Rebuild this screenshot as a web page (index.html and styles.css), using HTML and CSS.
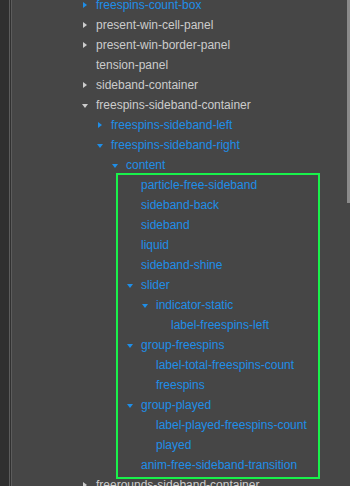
FILE: index.html
```html
<!DOCTYPE html>
<html lang="en">
<head>
    <meta charset="UTF-8">
    <meta name="viewport" content="width=device-width, initial-scale=1.0">
    <title>Hierarchy</title>
    <link rel="stylesheet" href="styles.css">
</head>
<body>
    <div class="panel">
        <div class="edge"></div>
        <div class="splitter"></div>

        <!-- Node tree -->
        <div class="tree">
            <ul class="nodes">
                <li class="node lv0 active"><span class="arrow closed"></span>freespins-count-box</li>
                <li class="node lv0"><span class="arrow closed"></span>present-win-cell-panel</li>
                <li class="node lv0"><span class="arrow closed"></span>present-win-border-panel</li>
                <li class="node lv0"><span class="arrow"></span>tension-panel</li>
                <li class="node lv0"><span class="arrow closed"></span>sideband-container</li>
                <li class="node lv0"><span class="arrow open"></span>freespins-sideband-container</li>
                <li class="node lv1 active"><span class="arrow closed"></span>freespins-sideband-left</li>
                <li class="node lv1 active"><span class="arrow open"></span>freespins-sideband-right</li>
                <li class="node lv2 active"><span class="arrow open"></span>content</li>
                <li class="node lv3 active"><span class="arrow"></span>particle-free-sideband</li>
                <li class="node lv3 active"><span class="arrow"></span>sideband-back</li>
                <li class="node lv3 active"><span class="arrow"></span>sideband</li>
                <li class="node lv3 active"><span class="arrow"></span>liquid</li>
                <li class="node lv3 active"><span class="arrow"></span>sideband-shine</li>
                <li class="node lv3 active"><span class="arrow open"></span>slider</li>
                <li class="node lv4 active"><span class="arrow open"></span>indicator-static</li>
                <li class="node lv5 active"><span class="arrow"></span>label-freespins-left</li>
                <li class="node lv3 active"><span class="arrow open"></span>group-freespins</li>
                <li class="node lv4 active"><span class="arrow"></span>label-total-freespins-count</li>
                <li class="node lv4 active"><span class="arrow"></span>freespins</li>
                <li class="node lv3 active"><span class="arrow open"></span>group-played</li>
                <li class="node lv4 active"><span class="arrow"></span>label-played-freespins-count</li>
                <li class="node lv4 active"><span class="arrow"></span>played</li>
                <li class="node lv3 active"><span class="arrow"></span>anim-free-sideband-transition</li>
                <li class="node lv0"><span class="arrow closed"></span>freerounds-sideband-container</li>
            </ul>

            <!-- highlight frame drawn over the tree -->
            <div class="highlight"></div>
        </div>

        <div class="scrollbar">
            <div class="thumb"></div>
        </div>
    </div>
</body>
</html>
```

FILE: styles.css
```css
* {
    margin: 0;
    padding: 0;
    box-sizing: border-box;
}

body {
    font-family: 'Liberation Sans', Arial, sans-serif;
    background: #464646;
    width: 350px;
    height: 486px;
    overflow: hidden;
}

.panel {
    display: flex;
    height: 486px;
}

.edge {
    width: 9px;
    background: #2f2f2f;
}

.splitter {
    width: 3px;
    background: #303030;
    border-left: 1px solid #5c5c5c;
    border-right: 1px solid #5c5c5c;
}

.tree {
    flex: 1;
    position: relative;
    overflow: hidden;
}

.nodes {
    list-style: none;
    margin-top: -5px;
}

.node {
    display: flex;
    align-items: center;
    height: 20px;
    font-size: 12px;
    color: #cccccc;
    white-space: nowrap;
}

.node.active {
    color: #1f8ee8;
}

.lv0 { padding-left: 70px; }
.lv1 { padding-left: 85px; }
.lv2 { padding-left: 100px; }
.lv3 { padding-left: 115px; }
.lv4 { padding-left: 130px; }
.lv5 { padding-left: 145px; }

.arrow {
    width: 14px;
    height: 20px;
    position: relative;
    flex-shrink: 0;
}

.arrow.closed::before {
    content: '';
    position: absolute;
    left: 1px;
    top: 7px;
    border-left: 4px solid currentColor;
    border-top: 3.5px solid transparent;
    border-bottom: 3.5px solid transparent;
}

.arrow.open::before {
    content: '';
    position: absolute;
    left: 0;
    top: 9px;
    border-top: 4px solid currentColor;
    border-left: 3.5px solid transparent;
    border-right: 3.5px solid transparent;
}

.node:not(.active) .arrow::before {
    border-left-color: #cccccc;
}

.node:not(.active) .arrow.open::before {
    border-left-color: transparent;
    border-top-color: #cccccc;
}

.highlight {
    position: absolute;
    left: 104px;
    top: 173px;
    width: 204px;
    height: 306px;
    border: 2px solid #19f24b;
}

.scrollbar {
    width: 3px;
}

.thumb {
    height: 203px;
    background: #8a8a8a;
}
```
